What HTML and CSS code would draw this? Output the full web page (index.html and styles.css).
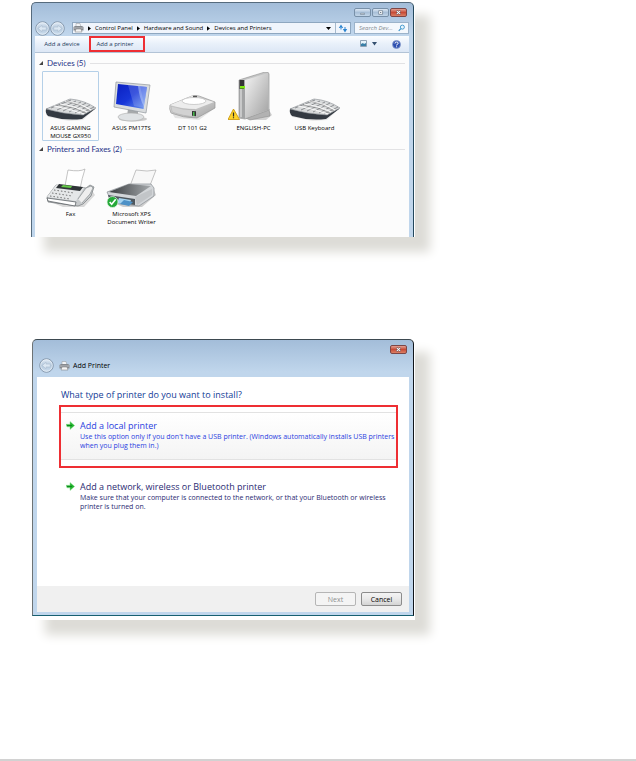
FILE: index.html
```
<!DOCTYPE html>
<html lang="en">

<head>
    <meta charset="UTF-8">
    <meta name="viewport" content="width=device-width, initial-scale=1.0">
    <title>Add a printer</title>
    <link rel="stylesheet" href="styles.css">
</head>

<body>

    <!-- shared drawings -->
    <svg class="defs" aria-hidden="true">
        <defs>
            <linearGradient id="metal" x1="0" y1="0" x2="1" y2="1">
                <stop offset="0" stop-color="#f4f4f4"/>
                <stop offset="1" stop-color="#a2a2a2"/>
            </linearGradient>
            <linearGradient id="dark" x1="0" y1="0" x2="1" y2="0">
                <stop offset="0" stop-color="#3a3d40"/>
                <stop offset="1" stop-color="#a5a9ac"/>
            </linearGradient>
            <linearGradient id="screen" x1="0" y1="0" x2="1" y2="1">
                <stop offset="0" stop-color="#0a1fc0"/>
                <stop offset="0.5" stop-color="#1736d8"/>
                <stop offset="1" stop-color="#6f9bf0"/>
            </linearGradient>
            <linearGradient id="orb" x1="0" y1="0" x2="0" y2="1">
                <stop offset="0" stop-color="#e4edf6"/>
                <stop offset="0.5" stop-color="#b4c8dc"/>
                <stop offset="1" stop-color="#cfe0f0"/>
            </linearGradient>
        </defs>
        <symbol id="keyboard" viewBox="0 0 52 50">
            <path d="M1 38 L24 27 L51 36 L38 48 L24 49 L3 45 Z" fill="#bbb" opacity=".3"/>
            <path d="M1 37 L26 28 L50 37 L37 47 Q20 49 3 44 Q0 41 1 37" fill="#343a42"/>
            <path d="M1 37 L25 27 Q39 28 51 36 L38 43 Q18 42 1 37" fill="#d9dbdc" stroke="#888d92" stroke-width=".6"/>
            <path d="M6 36 L26 28 M12 38 L31 29 M18 39 L36 30 M24 40 L41 31 M30 41 L45 33 M35 42 L49 35" stroke="#686c70" stroke-width=".7"/>
            <path d="M20 29 Q35 31 46 38 M15 32 Q30 34 42 40 M9 34 Q25 37 39 42" stroke="#f8f8f8" stroke-width="1.2" fill="none"/>
            <path d="M21 29 Q35 32 45 39 M14 33 Q29 35 41 41" stroke="#777" stroke-width=".5" fill="none"/>
        </symbol>
        <symbol id="smallprinter" viewBox="0 0 11 10">
            <path d="M3 .5h4l1 3.5H3z" fill="#f2f4f6" stroke="#909498" stroke-width=".5"/>
            <path d="M.5 4L2 3h7l1.5 1v3.5H.5z" fill="#85898e"/>
            <path d="M1 5h9" stroke="#c9cccf" stroke-width=".8"/>
            <path d="M3 6h5l1 3H2z" fill="#f5f5f5" stroke="#777" stroke-width=".5"/>
        </symbol>
        <symbol id="arrow" viewBox="0 0 9 9">
            <path d="M0 3.3h4V.6l4.6 3.9L4 8.4V5.8H1z" fill="#20b32c" stroke="#8cdb91" stroke-width=".5"/>
            <path d="M1 4.5h5" stroke="#087e18" stroke-width=".8"/>
        </symbol>
        <symbol id="back" viewBox="0 0 16 16">
            <circle cx="8" cy="8" r="7.2" fill="url(#orb)" stroke="#7f91a5"/>
            <circle cx="8" cy="8" r="6.2" fill="none" stroke="#eef5fb" stroke-width=".7"/>
            <path d="M3.5 8l4-3.5v2H12v3H7.5v2z" fill="#dce8f3" stroke="#a4b7ca" stroke-width=".5"/>
        </symbol>
        <symbol id="forward" viewBox="0 0 16 16">
            <circle cx="8" cy="8" r="7.2" fill="url(#orb)" stroke="#7f91a5"/>
            <circle cx="8" cy="8" r="6.2" fill="none" stroke="#eef5fb" stroke-width=".7"/>
            <path d="M12.5 8l-4-3.5v2H4v3h4.5v2z" fill="#dce8f3" stroke="#a4b7ca" stroke-width=".5"/>
        </symbol>
    </svg>

    <main class="page">

        <section class="shot shot-devices">
            <div class="window devices">
                <div class="titlebar">
                    <div class="controls">
                        <button class="control" aria-label="Minimize"><svg viewBox="0 0 17 9"><path d="M6 5.5h5v1.5H6z" fill="#fff" stroke="#596b7d" stroke-width=".7"/></svg></button>
                        <button class="control" aria-label="Maximize"><svg viewBox="0 0 17 9"><path d="M6.2 2.2h5v4.6h-5z" fill="#fff" stroke="#596b7d" stroke-width=".8"/><path d="M8 4h1.5v1H8z" fill="#596b7d"/></svg></button>
                        <button class="control close" aria-label="Close"><svg viewBox="0 0 17 9"><path d="M6 2.2l5 4.6M11 2.2L6 6.8" stroke="#5c3d42" stroke-width="2.4"/><path d="M6.2 2.4l4.6 4.2M10.8 2.4L6.2 6.6" stroke="#fff" stroke-width="1.3"/></svg></button>
                    </div>
                </div>

                <div class="navbar">
                    <svg class="orb"><use href="#back"/></svg>
                    <svg class="orb"><use href="#forward"/></svg>
                    <div class="address">
                        <svg class="tiny-printer"><use href="#smallprinter"/></svg>
                        <svg class="crumb" viewBox="0 0 4 6"><path d="M0 0l4 3-4 3z"/></svg>
                        <a href="#">Control Panel</a>
                        <svg class="crumb" viewBox="0 0 4 6"><path d="M0 0l4 3-4 3z"/></svg>
                        <a href="#">Hardware and Sound</a>
                        <svg class="crumb" viewBox="0 0 4 6"><path d="M0 0l4 3-4 3z"/></svg>
                        <a href="#">Devices and Printers</a>
                        <svg class="drop" viewBox="0 0 5 3"><path d="M0 0h5L2.5 3z"/></svg>
                        <button class="refresh" aria-label="Refresh"><svg viewBox="0 0 10 9"><path d="M3 .5L.8 4h4.4zM2.5 3.5h1v2h-1zM7 8.5L4.8 5h4.4zM6.5 3h1v2.5h-1z" fill="#2b84cf"/></svg></button>
                    </div>
                    <div class="search">
                        <input type="text" placeholder="Search Dev..." aria-label="Search Devices and Printers">
                        <svg viewBox="0 0 8 8"><circle cx="5" cy="3" r="2.3" fill="#e8f5fd" stroke="#3590c8"/><path d="M3.3 4.7L.8 7.2" stroke="#3590c8" stroke-width="1.3"/></svg>
                    </div>
                </div>

                <div class="toolbar">
                    <button class="tool">Add a device</button>
                    <button class="tool marked">Add a printer</button>
                    <button class="view" aria-label="Change your view">
                        <svg viewBox="0 0 17 8"><path d="M.5.5h6v6h-6z" fill="#e7f4fb" stroke="#8ea2b5"/><path d="M1 4l2-1 1 1 2-1v3H1z" fill="#397fa7"/><path d="M12 2h5l-2.5 3.5z" fill="#34506f"/></svg>
                    </button>
                    <button class="help" aria-label="Help">
                        <svg viewBox="0 0 9 9"><circle cx="4.5" cy="4.5" r="4" fill="#2d4fb0" stroke="#8ba0cb" stroke-width=".8"/><path d="M3 3.5Q3 2 4.6 2t1.5 1.3q0 1-1.5 1.5v.6M4.6 6.3v1" fill="none" stroke="#fff"/></svg>
                    </button>
                </div>

                <div class="list">
                    <h2 class="group"><svg viewBox="0 0 4 4"><path d="M4 0v4H0z"/></svg>Devices (5)</h2>
                    <div class="items">
                        <button class="item selected">
                            <svg viewBox="0 0 52 50"><use href="#keyboard"/></svg>
                            <span>ASUS GAMING MOUSE GX950</span>
                        </button>
                        <button class="item">
                            <svg viewBox="0 0 52 50">
                                <ellipse cx="27" cy="47" rx="14" ry="2.5" fill="#ccc"/>
                                <path d="M22 37l10 2v5H21z" fill="#a6a9ab"/>
                                <ellipse cx="25" cy="45" rx="13" ry="4" fill="#dfe2e4" stroke="#aaa" stroke-width=".6"/>
                                <path d="M10 10l34 3-4 28L8 35z" fill="#d9dcde" stroke="#92989d" stroke-width=".7"/>
                                <path d="M12 12l29 3-3.5 22L10 32z" fill="url(#screen)"/>
                                <path d="M22 13l12 1 5 22-11-2z" fill="#fff" opacity=".16"/>
                                <path d="M32 14l9 1-3 20q-5-10-6-21" fill="#cfe0ff" opacity=".45"/>
                            </svg>
                            <span>ASUS PM17TS</span>
                        </button>
                        <button class="item">
                            <svg viewBox="0 0 52 50">
                                <path d="M5 41l43-10v5L32 48 8 46z" fill="#aaa" opacity=".3"/>
                                <path d="M3 33l22-9q3-1 7 0l16 6v6L30 46q-14 0-26-5-2-4-1-8" fill="url(#metal)" stroke="#979797" stroke-width=".7"/>
                                <path d="M3 33l22-9 22 6-18 7q-14 0-26-4" fill="#ededed"/>
                                <ellipse cx="27" cy="29" rx="12" ry="3.5" fill="#fff" stroke="#bcbcbc" stroke-width=".7"/>
                                <path d="M4 34q12 4 24 4l2 7q-15-1-25-5z" fill="#d2d2d2" stroke="#aaa" stroke-width=".5"/>
                                <path d="M25 39l4 .3v5l-4-.5z" fill="#333"/><path d="M26 40h1.5v4H26z" fill="#48b84c"/>
                                <path d="M26 24.5h4" stroke="#555" stroke-width="1.3"/>
                            </svg>
                            <span>DT 101 G2</span>
                        </button>
                        <button class="item">
                            <svg viewBox="0 0 52 50">
                                <path d="M16 46l22-13 6 10-6 5H22z" fill="#888" opacity=".35"/>
                                <path d="M18 46l23-9 1 7-20 4z" fill="#b2b2b2" stroke="#888" stroke-width=".5"/>
                                <path d="M11 8L37 0q4-.5 4 2v36l-24 9-6-1z" fill="#c4c5c5" stroke="#989898" stroke-width=".7"/>
                                <path d="M17 8L40 1v37l-23 8z" fill="url(#metal)"/>
                                <path d="M11 8l6 0v39l-6-2z" fill="#a3a4a5"/>
                                <path d="M13 15v30" stroke="#eee"/><path d="M11.5 8H16v9h-4.5z" fill="#333"/>
                                <path d="M12 14h5v2.5h-5z" fill="#7be712"/>
                                <path d="M5.5 37l6 10.5H0z" fill="#ffd42a" stroke="#c79308" stroke-width=".8"/>
                                <path d="M5.5 40.5v4M5.5 45.3v1" stroke="#272727" stroke-width="1.2"/>
                            </svg>
                            <span>ENGLISH-PC</span>
                        </button>
                        <button class="item">
                            <svg viewBox="0 0 52 50"><use href="#keyboard"/></svg>
                            <span>USB Keyboard</span>
                        </button>
                    </div>

                    <h2 class="group"><svg viewBox="0 0 4 4"><path d="M4 0v4H0z"/></svg>Printers and Faxes (2)</h2>
                    <div class="items">
                        <button class="item">
                            <svg viewBox="0 0 52 50">
                                <path d="M8 45l38-14 4 6-11 12H18z" fill="#888" opacity=".3"/>
                                <path d="M20 28l3-16q12 2 17-1-3 9-5 20z" fill="#fff" stroke="#aaa" stroke-width=".7"/>
                                <path d="M2 39l9-12 30 3 4-3 4 2-3 9-8 8-5 2-30-4z" fill="#c7cacc" stroke="#777c80" stroke-width=".7"/>
                                <path d="M2 39l9-12 28 3-8 13z" fill="#e5e7e8"/>
                                <path d="M14 26l24 3-3 4-24-3z" fill="#303538"/><path d="M18 27l9 1-1 2-10-1z" fill="#64c947"/>
                                <path d="M2 40l29 4-1 4-27-5z" fill="#fff" stroke="#4e5357" stroke-width=".7"/>
                                <path d="M9 32l20 3M7 35l20 3M5 38l20 3" stroke="#555" stroke-width=".8" stroke-dasharray="1.5 2"/>
                                <path d="M33 41l8-11 5-2 2 2-3 6-8 9" fill="#eee" stroke="#8a8f92" stroke-width=".7"/>
                            </svg>
                            <span>Fax</span>
                        </button>
                        <button class="item">
                            <svg viewBox="0 0 52 50">
                                <path d="M6 44l42-12 2 5-14 12H17z" fill="#777" opacity=".35"/>
                                <path d="M24 28l6-16q12 2 20 0l-7 18z" fill="#f7f7f7" stroke="#aaa" stroke-width=".7"/>
                                <path d="M1 34l22-8h22l3 4v8L33 48 6 45z" fill="#d3d6d9" stroke="#888e93" stroke-width=".7"/>
                                <path d="M3 34l20-8 22 2-15 10z" fill="url(#dark)"/>
                                <path d="M2 37l27 4v6L4 44z" fill="#4e565d"/>
                                <path d="M29 39l17-8v6l-15 10z" fill="#c2c5c8"/>
                                <path d="M13 40l12 2-2 5-12-2z" fill="#a5d3f0"/><path d="M18 42l9 2-4 4-9-2z" fill="#4d91c7"/>
                                <circle cx="6.5" cy="44" r="5.5" fill="#25a939" stroke="#e9f9eb" stroke-width=".7"/>
                                <path d="M3.7 44l2 2.3 4-5" fill="none" stroke="#fff" stroke-width="1.6"/>
                            </svg>
                            <span>Microsoft XPS Document Writer</span>
                        </button>
                    </div>
                </div>
            </div>
        </section>

        <section class="shot shot-wizard">
            <div class="window wizard">
                <div class="titlebar">
                    <div class="controls">
                        <button class="control close" aria-label="Close"><svg viewBox="0 0 17 9"><path d="M6 2.2l5 4.6M11 2.2L6 6.8" stroke="#5c3d42" stroke-width="2.4"/><path d="M6.2 2.4l4.6 4.2M10.8 2.4L6.2 6.6" stroke="#fff" stroke-width="1.3"/></svg></button>
                    </div>
                </div>
                <div class="wizard-title">
                    <svg class="orb"><use href="#back"/></svg>
                    <svg class="tiny-printer"><use href="#smallprinter"/></svg>
                    <span>Add Printer</span>
                </div>
                <div class="wizard-body">
                    <h1>What type of printer do you want to install?</h1>
                    <div class="highlight">
                        <button class="option active">
                            <svg><use href="#arrow"/></svg>
                            <span>
                                <strong>Add a local printer</strong>
                                Use this option only if you don't have a USB printer. (Windows automatically installs USB printers<br>when you plug them in.)
                            </span>
                        </button>
                    </div>
                    <button class="option">
                        <svg><use href="#arrow"/></svg>
                        <span>
                            <strong>Add a network, wireless or Bluetooth printer</strong>
                            Make sure that your computer is connected to the network, or that your Bluetooth or wireless<br>printer is turned on.
                        </span>
                    </button>
                </div>
                <div class="wizard-footer">
                    <button class="btn" disabled>Next</button>
                    <button class="btn">Cancel</button>
                </div>
            </div>
        </section>

    </main>

    <hr class="rule">

</body>

</html>
```

FILE: styles.css
```
* {
    box-sizing: border-box;
}

body {
    margin: 0;
    min-height: 100vh;
    display: flex;
    flex-direction: column;
    background-color: #ffffff;
    font-family: "Open Sans", "Noto Sans", sans-serif;
    font-size: 6px;
    line-height: 8px;
    color: #000;
}

button,
input {
    font: inherit;
    color: inherit;
    margin: 0;
    padding: 0;
    border: none;
    background: none;
}

a {
    color: inherit;
    text-decoration: none;
}

svg {
    display: block;
    flex-shrink: 0;
}

.defs {
    position: absolute;
    width: 0;
    height: 0;
}

.page {
    flex: 1;
    padding: 2px 221px 40px 31px;
}

.shot {
    background-color: #fff;
    box-shadow: 14px 14px 10px 1px #dddcd7;
}

.shot-devices {
    padding-right: 1px;
    margin-bottom: 102px;
}

.shot-wizard {
    margin-left: 1px;
    padding: 0 1px 4px 0;
}

.window {
    border: 1px solid #566b7d;
    border-right-color: #24485c;
    border-radius: 5px 5px 0 0;
    background: linear-gradient(#a3bdd9, #c0d6ec 32px);
    padding: 0 4px 0 3px;
}

.devices {
    border-bottom: none;
}

.titlebar {
    height: 17px;
    padding: 5px 2px 0 0;
}

.controls {
    display: flex;
    justify-content: flex-end;
    gap: 1px;
}

.control {
    width: 17px;
    height: 9px;
    border: 1px solid #7890a8;
    border-radius: 2px;
    background: linear-gradient(#dce8f4, #a9c0d8 50%, #c3d6e8);
}

.control svg {
    width: 100%;
    height: 100%;
}

.close {
    border-color: #7d4646;
    background: linear-gradient(#e3a093, #c74c38 50%, #dc8065);
}

/* address row */
.navbar {
    display: flex;
    align-items: center;
    height: 16px;
}

.orb {
    width: 15px;
    height: 15px;
}

.address {
    flex: 1;
    display: flex;
    align-items: center;
    gap: 4px;
    height: 12px;
    margin-left: 7px;
    border: 1px solid #8ea7c0;
    background-color: #f0f5fc;
    white-space: nowrap;
}

.tiny-printer {
    width: 11px;
    height: 10px;
}

.crumb {
    width: 3px;
    height: 5px;
}

.drop {
    width: 5px;
    height: 3px;
    margin-left: auto;
}

.refresh {
    width: 15px;
    height: 10px;
    border-left: 1px solid #a5b9cd;
}

.refresh svg {
    width: 10px;
    height: 9px;
    margin: 0 auto;
}

.search {
    display: flex;
    align-items: center;
    width: 55px;
    height: 12px;
    margin-left: 3px;
    padding: 0 3px 0 4px;
    border: 1px solid #9cb3ca;
    background-color: #f4f8fd;
}

.search input {
    flex: 1;
    min-width: 0;
    height: 10px;
    font-style: italic;
}

.search input::placeholder {
    color: #83888e;
}

.search svg {
    width: 7px;
    height: 8px;
}

/* command bar */
.toolbar {
    display: flex;
    align-items: center;
    height: 17px;
    background: linear-gradient(#fbfdff, #e8f0fa 50%, #dce7f5);
    border-bottom: 1px solid #b2c3d6;
    color: #1e395b;
}

.tool {
    width: 54px;
    height: 16px;
}

.marked {
    width: 56px;
    padding-right: 4px;
    border: 2px solid #ee2e33;
}

.view {
    margin-left: auto;
}

.view svg {
    width: 17px;
    height: 8px;
}

.help {
    margin: 0 8px 0 15px;
}

.help svg {
    width: 9px;
    height: 9px;
}

.list {
    background-color: #fcfcfc;
    padding: 4px 4px 8px;
}

.group {
    display: flex;
    align-items: center;
    margin: 0;
    font-family: Lato, sans-serif;
    font-size: 8px;
    font-weight: normal;
    line-height: 12px;
    color: #1e3287;
}

.group svg {
    width: 4px;
    height: 4px;
    margin-right: 4px;
    fill: #444;
}

.group::after {
    content: "";
    flex: 1;
    height: 1px;
    margin-left: 4px;
    background-color: #e2e2e4;
}

.items {
    display: flex;
    flex-wrap: wrap;
    gap: 4px;
    padding: 2px 3px;
}

.item {
    display: flex;
    flex-direction: column;
    align-items: center;
    width: 57px;
    height: 70px;
    border: 1px solid transparent;
}

.item svg {
    width: 52px;
    height: 50px;
    margin-bottom: 2px;
}

.selected {
    border-color: #b5d0e8;
    border-radius: 1px;
}

/* wizard */
.wizard {
    border-color: #3d4950 #101519 #176071 #6d7375;
    padding: 0 4px 3px;
    font-size: 7px;
    line-height: 9px;
}

.wizard-title {
    display: flex;
    align-items: center;
    height: 20px;
    padding: 0 0 3px 2px;
}

.wizard-title .tiny-printer {
    margin: 0 3px 0 5px;
}

.wizard-body {
    height: 209px;
    padding: 12px 11px 0 22px;
    background-color: #fff;
}

.wizard-body h1 {
    margin: 0 0 4px 2px;
    font-size: 9px;
    font-weight: normal;
    line-height: 12px;
    color: #123b96;
}

.highlight {
    height: 63px;
    margin-bottom: 6px;
    padding: 5px 0 0;
    border: 2px solid #ee2e33;
}

.option {
    display: flex;
    gap: 5px;
    width: 100%;
    height: 48px;
    padding: 7px 0 0 5px;
    text-align: left;
    white-space: nowrap;
    color: #2a2a72;
}

.highlight + .option {
    padding-left: 7px;
}

.active {
    border: 1px solid #e2e2e2;
    border-width: 1px 0;
    background: linear-gradient(#fff, #f4f4f4);
    color: #2a3ee0;
}

.option svg {
    width: 9px;
    height: 9px;
    margin-top: 1px;
}

.option strong {
    display: block;
    font-size: 9px;
    font-weight: normal;
    line-height: 12px;
}

.wizard-footer {
    display: flex;
    justify-content: flex-end;
    align-items: center;
    gap: 5px;
    height: 26px;
    padding-right: 7px;
    background-color: #f0f0f0;
}

.btn {
    width: 41px;
    height: 14px;
    border: 1px solid #8c8c8c;
    border-radius: 2px;
    background: linear-gradient(#f4f4f4, #e9e9e9 50%, #d4d4d4);
}

.btn:disabled {
    border-color: #b5b5b5;
    background: #f4f4f4;
    color: #8f8f8f;
}

.rule {
    width: 100%;
    height: 2px;
    margin: 0;
    border: none;
    background-color: #d2d2d2;
}
```
